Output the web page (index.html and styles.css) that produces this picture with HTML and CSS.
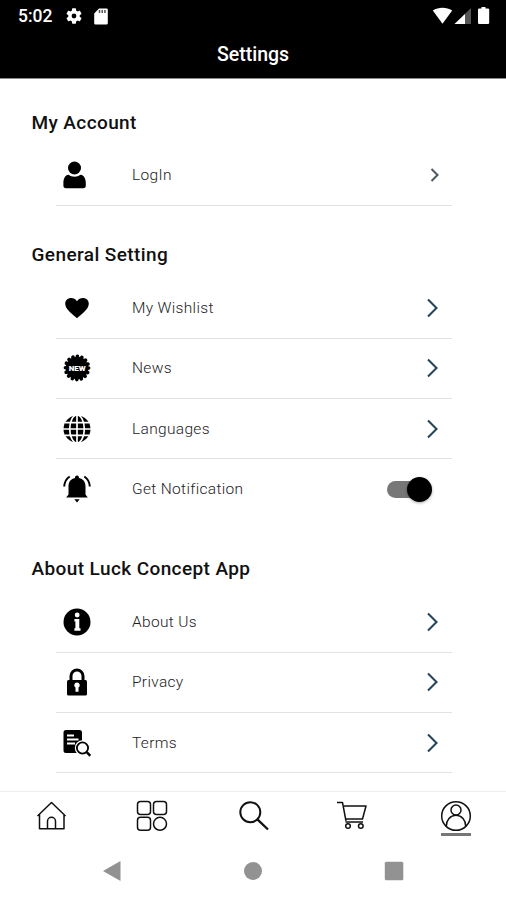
FILE: index.html
```html
<!DOCTYPE html>
<html lang="en">
<head>
<meta charset="utf-8">
<title>Settings</title>
<link rel="stylesheet" href="styles.css">
</head>
<body>
<div class="screen">
  <header class="header">
    <div class="status">
      <span class="clock">5:02</span>
      <svg class="gear" width="16" height="16" viewBox="2 2 20 20"><path fill="#fff" d="M19.14 12.94a7.5 7.5 0 0 0 0-1.88l2.03-1.58a.5.5 0 0 0 .12-.61l-1.92-3.32a.5.5 0 0 0-.59-.22l-2.39.96a7 7 0 0 0-1.62-.94l-.36-2.54a.5.5 0 0 0-.48-.41h-3.84a.5.5 0 0 0-.47.41l-.36 2.54a7 7 0 0 0-1.62.94l-2.39-.96a.5.5 0 0 0-.59.22L2.74 8.87a.5.5 0 0 0 .12.61l2.03 1.58a7.5 7.5 0 0 0 0 1.88l-2.03 1.58a.5.5 0 0 0-.12.61l1.92 3.32c.12.22.37.29.59.22l2.39-.96c.5.38 1.03.7 1.62.94l.36 2.54c.05.24.24.41.48.41h3.84c.24 0 .44-.17.47-.41l.36-2.54a7 7 0 0 0 1.62-.94l2.39.96c.22.08.47 0 .59-.22l1.92-3.32a.5.5 0 0 0-.12-.61zM12 15a3 3 0 1 1 0-6 3 3 0 0 1 0 6z"/></svg>
      <svg class="card" width="14" height="17" viewBox="0 0 14 17"><path fill="#fff" d="M5 .5h7.500a1.300 1.300 0 0 1 1.300 1.300v13.400a1.300 1.300 0 0 1-1.300 1.300h-11A1.300 1.300 0 0 1 .2 15.200V5.500z"/><path stroke="#555" stroke-width="1.500" d="M5.500 2v3M8.200 2v3M10.900 2v3"/></svg>
      <svg class="signals" width="58" height="18" viewBox="0 0 58 18"><path fill="#fff" d="M.8 3.500C6.500-.2 14.500-.2 20.200 3.500L10.500 16.700z"/><path fill="#555" d="M39 1v16H22.500z"/><path fill="#fff" d="M33 7v10H22.500z"/><path fill="#fff" d="M49.500 0h4v1.500H56a1.200 1.200 0 0 1 1.200 1.200v13.100A1.200 1.200 0 0 1 56 17h-8.800A1.200 1.200 0 0 1 46 15.800V2.700a1.200 1.200 0 0 1 1.200-1.200h2.300z"/></svg>
    </div>
    <h1 class="title">Settings</h1>
  </header>

  <main class="content">
    <section class="section">
      <h2 class="heading">My Account</h2>
      <div class="row">
        <svg class="icon" viewBox="0 0 28 28"><circle cx="11.500" cy="7" r="6.500"/><path d="M5.500 13.800c3.200 2.600 8.800 2.600 12 0 3.400.3 5.300 4 5.300 8.200v2.600a2.600 2.600 0 0 1-2.600 2.600H3a2.600 2.600 0 0 1-2.600-2.600V22c0-4.200 1.700-7.900 5.100-8.200z"/></svg>
        <span class="label">LogIn</span>
        <svg class="chevron small" viewBox="0 0 14 20"><path d="m4.500 4 6 6-6 6"/></svg>
      </div>
    </section>

    <section class="section">
      <h2 class="heading">General Setting</h2>
      <div class="row">
        <svg class="icon" viewBox="0 0 28 28"><path d="M14 24.200C10 20.500 2.200 15.500 2.200 9.800c0-6.300 8.500-8 11.800-2.500 3.300-5.500 11.800-3.800 11.800 2.500 0 5.700-7.800 10.700-11.800 14.400z"/></svg>
        <span class="label">My Wishlist</span>
        <svg class="chevron" viewBox="0 0 14 20"><path d="m2 1.500 8.500 8.500L2 18.500"/></svg>
      </div>
      <div class="row">
        <svg class="icon" viewBox="0 0 28 28"><circle cx="14" cy="14" r="11.300"/><circle cx="14" cy="14" r="11.600" fill="none" stroke="#000" stroke-width="3.600" stroke-linecap="round" stroke-dasharray=".1 4.455"/><text class="badge-text" x="14.200" y="17" text-anchor="middle" textLength="17" lengthAdjust="spacingAndGlyphs">NEW</text></svg>
        <span class="label">News</span>
        <svg class="chevron" viewBox="0 0 14 20"><path d="m2 1.500 8.500 8.500L2 18.500"/></svg>
      </div>
      <div class="row">
        <svg class="icon" viewBox="0 0 28 28"><circle cx="14" cy="14" r="13.500"/><g fill="none" stroke="#fff" stroke-width="1.700"><path d="M0 14h28M14 0v28M2 7.600h24M2 20.400h24"/><ellipse cx="14" cy="14" rx="7.300" ry="14"/></g></svg>
        <span class="label">Languages</span>
        <svg class="chevron" viewBox="0 0 14 20"><path d="m2 1.500 8.500 8.500L2 18.500"/></svg>
      </div>
      <div class="row faint">
        <svg class="icon" viewBox="0 0 28 28"><path d="M14 .5c1.300 0 2 1 2 2.400 4.300.9 6.500 4 6.500 8.300v8.300l2.300 3H3.200l2.300-3v-8.300c0-4.300 2.200-7.400 6.500-8.300 0-1.400.7-2.400 2-2.400zM11.300 24.300h5.400L14 27.500z"/><path fill="none" stroke="#000" stroke-width="2" d="M6.700 1.500C3.500 3.500 1.500 7 1.200 11.500M21.300 1.500c3.200 2 5.200 5.500 5.500 10"/></svg>
        <span class="label">Get Notification</span>
        <span class="switch"><span class="knob"></span></span>
      </div>
    </section>

    <section class="section">
      <h2 class="heading">About Luck Concept App</h2>
      <div class="row">
        <svg class="icon" viewBox="0 0 28 28"><circle cx="14" cy="14" r="13.500"/><path fill="#fff" d="M11.400 11h4.900v9.300h1.200v2.500h-6.100v-2.500h1v-6.900h-1z"/><circle cx="14.200" cy="7" r="2.400" fill="#fff"/></svg>
        <span class="label">About Us</span>
        <svg class="chevron" viewBox="0 0 14 20"><path d="m2 1.500 8.500 8.500L2 18.500"/></svg>
      </div>
      <div class="row">
        <svg class="icon" viewBox="0 0 28 28"><rect x="4" y="12" width="20" height="15.500" rx="1.500"/><path fill="none" stroke="#000" stroke-width="3" d="M8 13V8a6 6 0 0 1 12 0v5"/><path fill="#fff" d="M14 14.500a2.700 2.700 0 0 1 1.500 5v4.200h-3v-4.200a2.700 2.700 0 0 1 1.500-5z"/></svg>
        <span class="label">Privacy</span>
        <svg class="chevron" viewBox="0 0 14 20"><path d="m2 1.500 8.500 8.500L2 18.500"/></svg>
      </div>
      <div class="row">
        <svg class="icon" viewBox="0 0 28 28"><path d="M3 1h13.500A2.500 2.500 0 0 1 19 3.500V24H3a2.500 2.500 0 0 1-2.500-2.500v-18A2.500 2.500 0 0 1 3 1z"/><path stroke="#fff" stroke-width="1.800" d="M4 6.500h7M4 10.500h11.500M4 14.500h8"/><circle cx="19.500" cy="19" r="7.700" fill="#fff"/><g fill="none" stroke="#000" stroke-width="1.800"><circle cx="19.500" cy="19" r="5.600"/><path stroke-width="2.400" d="m23.700 23.200 3.600 3.600"/></g></svg>
        <span class="label">Terms</span>
        <svg class="chevron" viewBox="0 0 14 20"><path d="m2 1.500 8.500 8.500L2 18.500"/></svg>
      </div>
    </section>
  </main>

  <nav class="tabs">
    <svg class="tab" viewBox="0 0 32 32"><path d="M2.500 16 16.500 2.500l14 13.500M4.500 14.500v14.300H29V14.500M12.500 28.800v-7.500a4 4 0 0 1 8 0v7.500"/></svg>
    <svg class="tab" viewBox="0 0 32 32"><rect x="1.500" y="1.500" width="13" height="13" rx="3"/><rect x="17.500" y="1.500" width="13" height="13" rx="3"/><rect x="1.500" y="17.300" width="13" height="13" rx="3"/><circle cx="24" cy="23.800" r="6.500"/></svg>
    <svg class="tab" viewBox="0 0 32 32"><g stroke-width="2"><circle cx="12.300" cy="12.200" r="10"/><path d="m19.400 19.300 10.600 10.200" stroke-width="2.300"/></g></svg>
    <svg class="tab cart" viewBox="0 0 32 32"><path d="M1 2.500h5.500L10 21M8 6h22l-3.500 13H10M9.500 22H27"/><circle cx="12" cy="26" r="2.300"/><circle cx="24.800" cy="26" r="2.300"/></svg>
    <span class="tab-active">
      <svg class="tab" viewBox="0 0 32 32"><circle cx="16" cy="16" r="14.300"/><circle cx="16" cy="10" r="5"/><path d="M6.300 26.200c0-6 3.900-11 9.700-11s9.700 5 9.700 11"/></svg>
    </span>
  </nav>
  <footer class="system">
    <svg width="20" height="22" viewBox="0 0 20 22"><path fill="#929292" d="M1 11 18.500 1v20z"/></svg>
    <svg width="20" height="20" viewBox="0 0 20 20"><circle cx="10" cy="10" r="9" fill="#929292"/></svg>
    <svg width="20" height="20" viewBox="0 0 20 20"><rect x=".8" y=".8" width="18.500" height="18.500" rx="1.500" fill="#929292"/></svg>
  </footer>
</div>
</body>
</html>
```

FILE: styles.css
```css
* { box-sizing: border-box; }
body { margin: 0; background: #fff; font-family: Roboto, "Liberation Sans", sans-serif; }
svg { display: block; flex: none; }
.screen { width: 506px; height: 900px; overflow: hidden; display: flex; flex-direction: column; }

.header { height: 79px; flex: none; background: #000; border-bottom: 1px solid #888; color: #fff; }
.status { display: flex; align-items: center; height: 32px; padding: 0 16px 0 18px; }
.clock { width: 48px; font-size: 17.500px; font-weight: 500; }
.card { margin-left: 12px; }
.signals { margin-left: auto; }
.title { margin: 0; font-size: 19.500px; line-height: 46px; font-weight: 500; text-align: center; }

.content { height: 712px; flex: none; overflow: hidden; padding-top: 20.500px; }
.section { margin-bottom: 26.700px; }
.heading { margin: 0; padding-left: 31.500px; height: 46px; line-height: 46px; font-size: 19px; font-weight: 500; color: #111; letter-spacing: .4px; }
.row { display: flex; align-items: center; height: 60.300px; margin: 0 54px 0 56px; padding: 0 12px 0 7px; border-bottom: 1.500px solid #e2e2e2; }
.icon { width: 28px; height: 28px; }
.label { margin-left: 41px; font-size: 15.500px; font-weight: 300; color: #222; letter-spacing: .33px; }
.chevron { width: 14px; height: 20px; margin-left: auto; fill: none; stroke: #23465c; stroke-width: 2.100; }
.chevron.small { stroke: #4e5c60; margin-right: -1px; }
.badge-text { font: 900 8px Roboto, sans-serif; fill: #fff; }
.faint { border-bottom-color: transparent; }
.switch { position: relative; width: 38px; height: 17px; margin-left: auto; margin-right: 15px; border-radius: 9px; background: #777; }
.knob { position: absolute; top: -4px; right: -7px; width: 25px; height: 25px; border-radius: 50%; background: #000; box-shadow: 0 1px 3px rgba(0,0,0,.35); }

.tabs { display: flex; justify-content: space-between; height: 51px; flex: none; padding: 8px 34px 0 35px; border-top: 1px solid #eee; }
.tab { width: 32px; height: 32px; fill: none; stroke: #111; stroke-width: 1.500; stroke-linejoin: round; }
.cart { margin-left: -3px; margin-right: 3px; }
.tab-active { height: 37px; display: flex; flex-direction: column; }
.tab-active::after { content: ""; height: 3px; flex: none; margin: 1px 1px 0; background: #777; }
.system { display: flex; justify-content: space-between; align-items: center; height: 58px; padding: 0 102px; }
```
